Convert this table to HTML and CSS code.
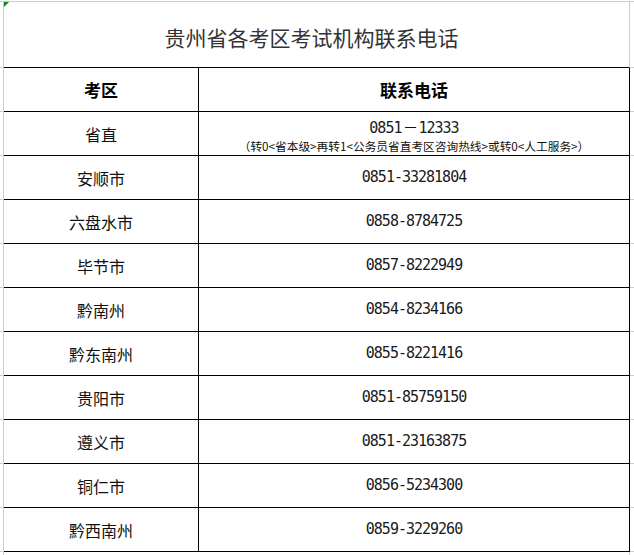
FILE: index.html
```html
<!DOCTYPE html>
<html lang="zh-CN">
<head>
<meta charset="utf-8">
<title>贵州省各考区考试机构联系电话</title>
<link rel="stylesheet" href="styles.css">
</head>
<body>
<div class="sheet">
  <div class="row title-row">
    <div class="gl"></div>
    <div class="title">贵州省各考区考试机构联系电话</div>
    <div class="gr"></div>
  </div>
  <div class="row head">
    <div class="gl"></div>
    <div class="c1">考区</div>
    <div class="c2">联系电话</div>
    <div class="gr"></div>
  </div>
  <div class="row">
    <div class="gl"></div>
    <div class="c1">省直</div>
    <div class="c2 multi">
      <div class="line1"><span class="num">0851</span><span class="dash">一</span><span class="num">12333</span></div>
      <div class="line2">（转0&lt;省本级&gt;再转1&lt;公务员省直考区咨询热线&gt;或转0&lt;人工服务&gt;）</div>
    </div>
    <div class="gr"></div>
  </div>
  <div class="row"><div class="gl"></div><div class="c1">安顺市</div><div class="c2"><span class="num">0851-33281804</span></div><div class="gr"></div></div>
  <div class="row"><div class="gl"></div><div class="c1">六盘水市</div><div class="c2"><span class="num">0858-8784725</span></div><div class="gr"></div></div>
  <div class="row"><div class="gl"></div><div class="c1">毕节市</div><div class="c2"><span class="num">0857-8222949</span></div><div class="gr"></div></div>
  <div class="row"><div class="gl"></div><div class="c1">黔南州</div><div class="c2"><span class="num">0854-8234166</span></div><div class="gr"></div></div>
  <div class="row"><div class="gl"></div><div class="c1">黔东南州</div><div class="c2"><span class="num">0855-8221416</span></div><div class="gr"></div></div>
  <div class="row"><div class="gl"></div><div class="c1">贵阳市</div><div class="c2"><span class="num">0851-85759150</span></div><div class="gr"></div></div>
  <div class="row"><div class="gl"></div><div class="c1">遵义市</div><div class="c2"><span class="num">0851-23163875</span></div><div class="gr"></div></div>
  <div class="row"><div class="gl"></div><div class="c1">铜仁市</div><div class="c2"><span class="num">0856-5234300</span></div><div class="gr"></div></div>
  <div class="row"><div class="gl"></div><div class="c1">黔西南州</div><div class="c2"><span class="num">0859-3229260</span></div><div class="gr"></div></div>
  <div class="row filler"><div class="gl"></div><div class="fill"></div></div>
</div>
</body>
</html>
```

FILE: styles.css
```css
* { box-sizing: border-box; }
html, body { margin: 0; padding: 0; background: #fff; }
body {
  font-family: "Noto Sans CJK SC", sans-serif;
  color: #111;
}
.sheet {
  width: 634px;
  height: 555px;
  margin-top: 1px;
  border-top: 1px solid #c9cbd8;
  overflow: hidden;
}
.row {
  display: flex;
  height: 44px;
}
.title-row { height: 66px; }
.filler { height: 10px; }
.gl {
  width: 4px;
  flex: none;
  border-right: 1px solid #c9cbd8;
  border-bottom: 1px solid #c9cbd8;
}
.filler .gl { border-bottom: none; }
.gr {
  width: 4px;
  flex: none;
  border-bottom: 1px solid #c9cbd8;
}
.fill {
  width: 626px;
  border-right: 1px solid #c9cbd8;
}
.title {
  position: relative;
  width: 626px;
  flex: none;
  border-right: 1px solid #c9cbd8;
  border-bottom: 1px solid #000;
  display: flex;
  align-items: center;
  justify-content: center;
  padding: 4px 10px 0 0;
  font-size: 21px;
  color: #333;
}
.title::before {
  content: "";
  position: absolute;
  left: 0;
  top: 0;
  width: 0;
  height: 0;
  border-top: 5px solid #118011;
  border-right: 5px solid transparent;
}
.c1, .c2 {
  flex: none;
  border-right: 1px solid #000;
  border-bottom: 1px solid #000;
  display: flex;
  align-items: center;
  justify-content: center;
  font-size: 16px;
  line-height: 1;
}
.c1 { width: 195px; }
.c2 { width: 431px; }
.head .c1, .head .c2 {
  font-weight: bold;
  font-size: 17px;
  color: #000;
}
.num {
  font-family: "DejaVu Sans Mono", monospace;
  font-size: 15px;
  letter-spacing: -1px;
  color: #1a1a1a;
}
.multi {
  flex-direction: column;
  padding-top: 6px;
}
.line1 {
  height: 18px;
  line-height: 18px;
  display: flex;
  align-items: baseline;
}
.dash {
  font-size: 12px;
  margin: 0 2px 0 3px;
}
.line2 {
  height: 17px;
  line-height: 17px;
  font-size: 11.7px;
  white-space: nowrap;
}
```
